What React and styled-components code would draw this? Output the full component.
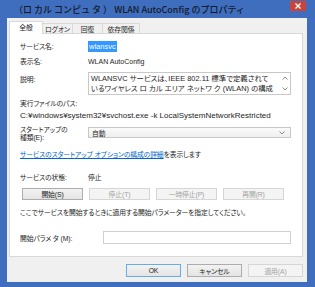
import React from 'react';
import styled, { createGlobalStyle } from 'styled-components';

const GlobalStyle = createGlobalStyle`
  html, body {
    margin: 0;
    padding: 0;
  }
  body {
    width: 315px;
    height: 287px;
    overflow: hidden;
    font-family: "Liberation Sans", "Noto Sans CJK JP", sans-serif;
    font-feature-settings: "palt";
    font-size: 6.8px;
    letter-spacing: -0.1px;
    color: #1e1e1e;
  }
`;

const Window = styled.div`
  width: 315px;
  height: 287px;
  box-sizing: border-box;
  background: #3e6ebd;
  padding: 0 8px 5px 7px;
  display: flex;
  flex-direction: column;
`;

const TitleBar = styled.div`
  height: 18px;
  flex-shrink: 0;
  display: flex;
  align-items: flex-start;
  justify-content: space-between;
`;

const Title = styled.div`
  font-family: "Noto Sans CJK JP", sans-serif;
  font-feature-settings: normal;
  font-size: 9px;
  letter-spacing: 0;
  font-weight: 500;
  color: #15192a;
  padding: 3px 0 0 7px;
  white-space: nowrap;
`;

const CloseButton = styled.div`
  width: 16px;
  height: 10px;
  margin: 1px 1px 0 0;
  background: #c9453c;
  display: flex;
  align-items: center;
  justify-content: center;
`;

const Body = styled.div`
  flex: 1;
  background: #f0f0f0;
  padding: 3px 4px 5px 2px;
  display: flex;
  flex-direction: column;
`;

const TabBar = styled.div`
  height: 12px;
  display: flex;
  align-items: flex-end;
`;

const Tab = styled.div`
  width: ${p => p.$w}px;
  height: ${p => (p.$active ? 13 : 10)}px;
  margin-bottom: ${p => (p.$active ? -1 : 0)}px;
  margin-left: ${p => (p.$first ? 0 : -1)}px;
  box-sizing: border-box;
  border: 1px solid #d9d9d9;
  border-bottom: none;
  background: ${p => (p.$active ? '#fff' : '#f0f0f0')};
  position: relative;
  z-index: ${p => (p.$active ? 1 : 0)};
  display: flex;
  align-items: center;
  justify-content: center;
  padding-bottom: ${p => (p.$active ? 2 : 0)}px;
`;

const Panel = styled.div`
  flex: 1;
  background: #fff;
  border: 1px solid #d9d9d9;
  padding: 0 11px 0 10px;
  display: flex;
  flex-direction: column;
`;

const Row = styled.div`
  display: flex;
  align-items: ${p => p.$align || 'center'};
  margin-top: ${p => p.$top}px;
  min-height: ${p => p.$h || 10}px;
  white-space: nowrap;
`;

const Label = styled.div`
  width: 68px;
  flex-shrink: 0;
  padding-top: ${p => p.$pt || 0}px;
  line-height: ${p => p.$lh || 'normal'};
`;

const Latin = styled.span`
  font-size: ${p => p.$size || 7.5}px;
  letter-spacing: 0;
`;

const Selected = styled.span`
  background: #3399ff;
  color: #fff;
  padding: 1px 1px;
  font-size: 7.5px;
  letter-spacing: 0;
`;

const TextBox = styled.div`
  flex: 1;
  height: ${p => p.$h}px;
  box-sizing: border-box;
  border: 1px solid #c8c8c8;
  display: flex;
  background: #fff;
`;

const TextLines = styled.div`
  flex: 1;
  padding: 1px 2px;
  line-height: 10px;
  font-size: 7.4px;
  letter-spacing: 0;
  overflow: hidden;
`;

const ScrollCol = styled.div`
  width: 11px;
  display: flex;
  flex-direction: column;
  justify-content: space-between;
  align-items: center;
  padding: 3px 0;
`;

const Select = styled.div`
  flex: 1;
  height: 11px;
  margin-top: 1px;
  box-sizing: border-box;
  border: 1px solid #c8c8c8;
  background: linear-gradient(#fafafa, #efefef);
  display: flex;
  align-items: center;
  justify-content: space-between;
  padding: 0 5px 0 3px;
`;

const Link = styled.span`
  color: #0066cc;
  text-decoration: underline;
`;

const ButtonRow = styled.div`
  display: flex;
  gap: 6px;
  margin-left: 2px;
`;

const Button = styled.div`
  width: ${p => p.$w}px;
  height: ${p => p.$h}px;
  box-sizing: border-box;
  border: 1px solid ${p => (p.$default ? '#63aee8' : p.$disabled ? '#d6d6d6' : '#adadad')};
  background: ${p => (p.$disabled ? '#f4f4f4' : 'linear-gradient(#f2f2f2, #e4e4e4)')};
  color: ${p => (p.$disabled ? '#a3a3a3' : '#1e1e1e')};
  display: flex;
  align-items: center;
  justify-content: center;
`;

const Input = styled.div`
  width: 188px;
  height: 13px;
  margin-left: auto;
  box-sizing: border-box;
  border: 1px solid #d0d0d0;
  background: #fff;
`;

const Footer = styled.div`
  margin-top: 7px;
  display: flex;
  justify-content: flex-end;
  gap: 6px;
`;

const Chevron = ({ up }) => (
  <svg width="6" height="4" viewBox="0 0 6 4">
    <polyline
      points={up ? '0.5,3.5 3,1 5.5,3.5' : '0.5,0.5 3,3 5.5,0.5'}
      fill="none"
      stroke="#8a8a8a"
      strokeWidth="1"
    />
  </svg>
);

const App = () => (
  <>
    <GlobalStyle />
    <Window>
      <TitleBar>
        <Title>（ロ カル コンピュ タ ） WLAN AutoConfig のプロパティ</Title>
        <CloseButton>
          <svg width="6" height="6" viewBox="0 0 6 6">
            <path d="M0.5 0.5 L5.5 5.5 M5.5 0.5 L0.5 5.5" stroke="#fff" strokeWidth="1.3" />
          </svg>
        </CloseButton>
      </TitleBar>
      <Body>
        <TabBar>
          <Tab $w={34} $active $first>全般</Tab>
          <Tab $w={31}>ログオン</Tab>
          <Tab $w={31}>回復</Tab>
          <Tab $w={38}>依存関係</Tab>
        </TabBar>
        <Panel>
          <Row $top={6} $h={12}>
            <Label>サービス名:</Label>
            <Selected>wlansvc</Selected>
          </Row>
          <Row $top={3} $h={12}>
            <Label>表示名:</Label>
            <Latin $size={7}>WLAN AutoConfig</Latin>
          </Row>
          <Row $top={5} $align="flex-start">
            <Label $pt={2}>説明:</Label>
            <TextBox $h={23}>
              <TextLines>
                <div>WLANSVC サービスは、IEEE 802.11 標準で定義されて</div>
                <div>いるワイヤレス ロ カル エリア ネットワ ク (WLAN) の構成</div>
              </TextLines>
              <ScrollCol>
                <Chevron up />
                <Chevron />
              </ScrollCol>
            </TextBox>
          </Row>
          <Row $top={3}>
            <span>実行ファイルのパス:</span>
          </Row>
          <Row $top={2}>
            <Latin $size={8}>C:¥windows¥system32¥svchost.exe -k LocalSystemNetworkRestricted</Latin>
          </Row>
          <Row $top={6} $align="flex-start">
            <Label $lh="8px">
              スタートアップの
              <br />
              種類(E):
            </Label>
            <Select>
              <span>自動</span>
              <Chevron />
            </Select>
          </Row>
          <Row $top={7}>
            <span>
              <Link>サービスのスタートアップ オプションの構成の詳細</Link>を表示します
            </span>
          </Row>
          <Row $top={13}>
            <Label>サービスの状態:</Label>
            <span>停止</span>
          </Row>
          <Row $top={6}>
            <ButtonRow>
              <Button $w={61} $h={12}>開始(S)</Button>
              <Button $w={61} $h={12} $disabled>停止(T)</Button>
              <Button $w={61} $h={12} $disabled>一時停止(P)</Button>
              <Button $w={61} $h={12} $disabled>再開(R)</Button>
            </ButtonRow>
          </Row>
          <Row $top={7}>
            <span>ここでサービスを開始するときに適用する開始パラメーターを指定してください。</span>
          </Row>
          <Row $top={14} $h={13}>
            <span>開始パラメ タ (M):</span>
            <Input />
          </Row>
        </Panel>
        <Footer>
          <Button $w={55} $h={13} $default>OK</Button>
          <Button $w={55} $h={13}>キャンセル</Button>
          <Button $w={55} $h={13} $disabled>適用(A)</Button>
        </Footer>
      </Body>
    </Window>
  </>
);

export default App;
